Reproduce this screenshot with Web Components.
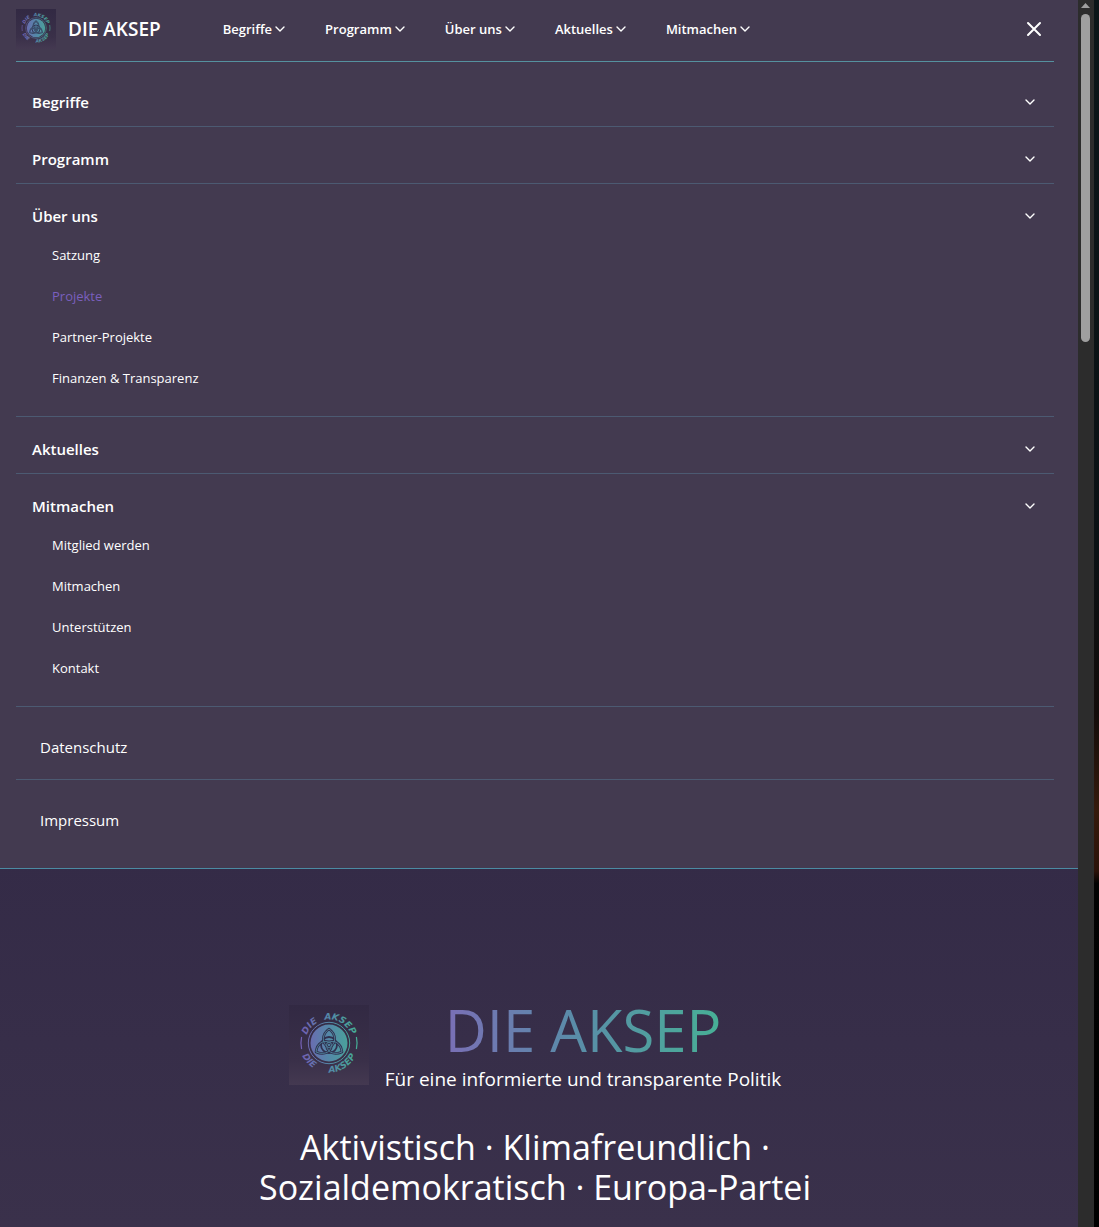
<!DOCTYPE html>
<html lang="de">
<head>
<meta charset="utf-8">
<meta name="viewport" content="width=device-width, initial-scale=1">
<title>DIE AKSEP</title>
<style>
  :root {
    --ink: #fff;
    --violet: #7a5fbe;
    --panel: #433a50;
    --rule: #4c5a72;
    --teal: #55919f;
  }
  html, body { margin: 0; height: 100%; }
  body {
    font-family: "Open Sans", "Noto Sans", sans-serif;
    color: var(--ink);
    background: #342b47;
    overflow: hidden;
  }
</style>
</head>
<body>
<aksep-page>
  <site-header slot="header">
    <nav-item label="Begriffe"></nav-item>
    <nav-item label="Programm"></nav-item>
    <nav-item label="Über uns"></nav-item>
    <nav-item label="Aktuelles"></nav-item>
    <nav-item label="Mitmachen"></nav-item>
  </site-header>
  <side-menu slot="menu">
    <menu-group label="Begriffe"></menu-group>
    <menu-group label="Programm"></menu-group>
    <menu-group label="Über uns" open>
      <menu-link>Satzung</menu-link>
      <menu-link active>Projekte</menu-link>
      <menu-link>Partner-Projekte</menu-link>
      <menu-link>Finanzen &amp; Transparenz</menu-link>
    </menu-group>
    <menu-group label="Aktuelles"></menu-group>
    <menu-group label="Mitmachen" open>
      <menu-link>Mitglied werden</menu-link>
      <menu-link>Mitmachen</menu-link>
      <menu-link>Unterstützen</menu-link>
      <menu-link>Kontakt</menu-link>
    </menu-group>
    <menu-link top>Datenschutz</menu-link>
    <menu-link top last>Impressum</menu-link>
  </side-menu>
  <hero-banner slot="hero"></hero-banner>
</aksep-page>

<script>
  const define = (name, html, setup) => customElements.define(name, class extends HTMLElement {
    connectedCallback() {
      if (this.shadowRoot) return;
      const root = this.attachShadow({ mode: 'open' });
      const t = document.createElement('template');
      t.innerHTML = html;
      root.append(t.content.cloneNode(true));
      if (setup) setup(root, this);
    }
  });

  define('chevron-icon', `
    <style>:host{display:block;width:10px;height:10px} svg{display:block;width:100%;height:100%}</style>
    <svg viewBox="0 0 10 10" fill="none" stroke="currentColor" stroke-width="1.4" stroke-linecap="round" stroke-linejoin="round" aria-hidden="true"><path d="M1 3l4 4 4-4"/></svg>`);

  define('aksep-logo', `
    <style>
      :host{display:block;flex:none;width:40px;height:40px}
      :host([large]){width:80px;height:80px}
      svg{display:block;width:100%;height:100%}
      text{font:italic 700 9px "DejaVu Sans",sans-serif}
    </style>
    <svg viewBox="0 0 80 80" role="img" aria-label="Logo">
      <defs>
        <linearGradient id="bg" x1="0" y1="0" x2="0" y2="1"><stop offset="0" stop-color="#322943"/><stop offset=".7" stop-color="#3a3049"/><stop offset="1" stop-color="#443951"/></linearGradient>
        <linearGradient id="g" gradientUnits="userSpaceOnUse" x1="12" y1="38" x2="68" y2="38"><stop offset="0" stop-color="#745fb4"/><stop offset=".5" stop-color="#5488a8"/><stop offset="1" stop-color="#45ad94"/></linearGradient>
        <path id="top" d="M16.5 38a23.5 23.5 0 0 1 47 0"/>
        <path id="low" d="M10.5 38a29.5 29.5 0 0 0 59 0"/>
      </defs>
      <rect width="80" height="80" fill="url(#bg)"/>
      <circle cx="40" cy="38" r="18.5" fill="url(#g)"/>
      <g fill="none" stroke="url(#g)">
        <circle cx="40" cy="38" r="20.7" stroke-width="1"/>
        <path stroke-width="1.2" d="M12.600 32a28 28 0 0 0 0 12M67.400 32a28 28 0 0 1 0 12"/>
      </g>
      <g fill="none" stroke="#30304f" stroke-width="2.6" stroke-linejoin="round">
        <path d="M40 24C47 29 48 38 40 43C32 38 33 29 40 24z"/>
        <path d="M27 47C28 38 35 34 42 38C44 46 36 51 27 47z"/>
        <path d="M53 47C52 38 45 34 38 38C36 46 44 51 53 47z"/>
        <circle cx="40" cy="40" r="8" stroke-width="1.8"/>
      </g>
      <g fill="none" stroke="#5390a8" stroke-width=".8" stroke-linejoin="round">
        <path d="M40 24C47 29 48 38 40 43C32 38 33 29 40 24z"/>
        <path d="M27 47C28 38 35 34 42 38C44 46 36 51 27 47z"/>
        <path d="M53 47C52 38 45 34 38 38C36 46 44 51 53 47z"/>
      </g>
      <g fill="url(#g)">
        <text><textPath href="#top" startOffset="8">DIE</textPath></text>
        <text><textPath href="#top" startOffset="32">AKSEP</textPath></text>
        <text><textPath href="#low" startOffset="13">DIE</textPath></text>
        <text><textPath href="#low" startOffset="46">AKSEP</textPath></text>
      </g>
    </svg>`);

  define('nav-item', `
    <style>
      :host{display:block}
      button{display:flex;align-items:center;gap:3px;margin:0;padding:0;border:0;background:none;color:inherit;font-family:inherit;font-size:13px;font-weight:600;line-height:20px;white-space:nowrap;cursor:pointer}
    </style>
    <button type="button" aria-haspopup="true"><span></span><chevron-icon></chevron-icon></button>`,
    (r, el) => { r.querySelector('span').textContent = el.getAttribute('label'); });

  define('site-header', `
    <style>
      :host{display:block}
      header{display:flex;align-items:center;box-sizing:border-box;height:62px;padding-bottom:3px;border-bottom:1px solid var(--teal)}
      .brand{display:flex;align-items:center;gap:12px;color:inherit;text-decoration:none;font-size:19px;font-weight:600;line-height:28px;white-space:nowrap}
      nav{display:flex;gap:40px;margin-left:62px}
      .close{margin:0 12px 0 auto;padding:0;border:0;background:none;color:inherit;cursor:pointer}
      .close svg{display:block}
    </style>
    <header>
      <a class="brand" href="#"><aksep-logo></aksep-logo><span>DIE AKSEP</span></a>
      <nav><slot></slot></nav>
      <button class="close" type="button" aria-label="Menü schließen">
        <svg width="16" height="16" viewBox="0 0 16 16" fill="none" stroke="currentColor" stroke-width="2" stroke-linecap="round"><path d="M2 2l12 12M14 2L2 14"/></svg>
      </button>
    </header>`);

  define('menu-link', `
    <style>
      :host{display:block}
      a{display:block;padding:10px 20px 11px 36px;font-size:13px;line-height:20px;color:inherit;text-decoration:none}
      :host([active]) a{color:var(--violet)}
      :host([top]) a{padding:28px 24px 20px;font-size:15px;line-height:24px;border-bottom:1px solid var(--rule)}
      :host([top][last]) a{border-bottom:0}
    </style>
    <a href="#"><slot></slot></a>`);

  define('menu-group', `
    <style>
      :host{display:block;border-bottom:1px solid var(--rule)}
      button{display:flex;align-items:center;justify-content:space-between;width:100%;margin:0;padding:20px 19px 12px 16px;border:0;background:none;color:inherit;font-family:inherit;font-size:15px;font-weight:600;line-height:24px;text-align:left;cursor:pointer}
      .items{display:none}
      :host([open]) .items{display:block;padding-bottom:17px}
      :host([open]) button{padding-bottom:7px}
    </style>
    <button type="button"><span></span><chevron-icon></chevron-icon></button>
    <div class="items"><slot></slot></div>`,
    (r, el) => {
      r.querySelector('span').textContent = el.getAttribute('label');
      r.querySelector('button').setAttribute('aria-expanded', el.hasAttribute('open'));
    });

  define('side-menu', `
    <style>:host{display:block;padding:8px 0 16px}</style>
    <nav><slot></slot></nav>`);

  define('hero-banner', `
    <style>
      :host{display:block;padding:131px 24px 24px 16px;text-align:center}
      .lockup{display:flex;justify-content:center;align-items:center;gap:16px}
      .words{display:flex;flex-direction:column;align-items:center;gap:8px}
      h1{margin:0;font-size:58px;font-weight:400;line-height:60px;color:transparent;background:linear-gradient(90deg,#7a6fb6,#5b8ba9 45%,#47b096);-webkit-background-clip:text;background-clip:text}
      p{margin:0;font-size:19px;line-height:22px}
      h2{max-width:600px;margin:37px auto 0;font-size:34px;font-weight:400;line-height:40px}
    </style>
    <section>
      <div class="lockup">
        <aksep-logo large></aksep-logo>
        <div class="words"><h1>DIE AKSEP</h1><p>Für eine informierte und transparente Politik</p></div>
      </div>
      <h2>Aktivistisch · Klimafreundlich · Sozialdemokratisch · Europa-Partei</h2>
    </section>`);

  define('scroll-rail', `
    <style>
      :host{display:flex;flex-direction:column;align-items:center;flex:none;box-sizing:border-box;width:16px;padding-right:1px;background:#2c2c2c}
      svg{display:block;margin:3px 0 6px}
      .thumb{width:9px;height:26.7%;border-radius:5px;background:#9f9f9f}
    </style>
    <svg width="9" height="5" viewBox="0 0 9 5" aria-hidden="true"><path d="M4.500 0L9 5H0z" fill="#9f9f9f"/></svg>
    <div class="thumb"></div>`);

  define('aksep-page', `
    <style>
      :host{display:flex;height:100vh;overflow:hidden}
      main{flex:1;min-width:0;overflow:hidden;background:linear-gradient(#342b47 70%,#3a314b)}
      .panel{padding:0 24px 0 16px;background:var(--panel);border-bottom:1px solid #4b8ba3}
      .edge{flex:none;width:5px;background:linear-gradient(#0b1518 0,#0b1114 45%,#120c0a 58%,#351a0c 66%,#2b1209 71%,#020202 72%,#000 100%)}
    </style>
    <main>
      <div class="panel"><slot name="header"></slot><slot name="menu"></slot></div>
      <slot name="hero"></slot>
    </main>
    <scroll-rail></scroll-rail>
    <div class="edge"></div>`);
</script>
</body>
</html>
